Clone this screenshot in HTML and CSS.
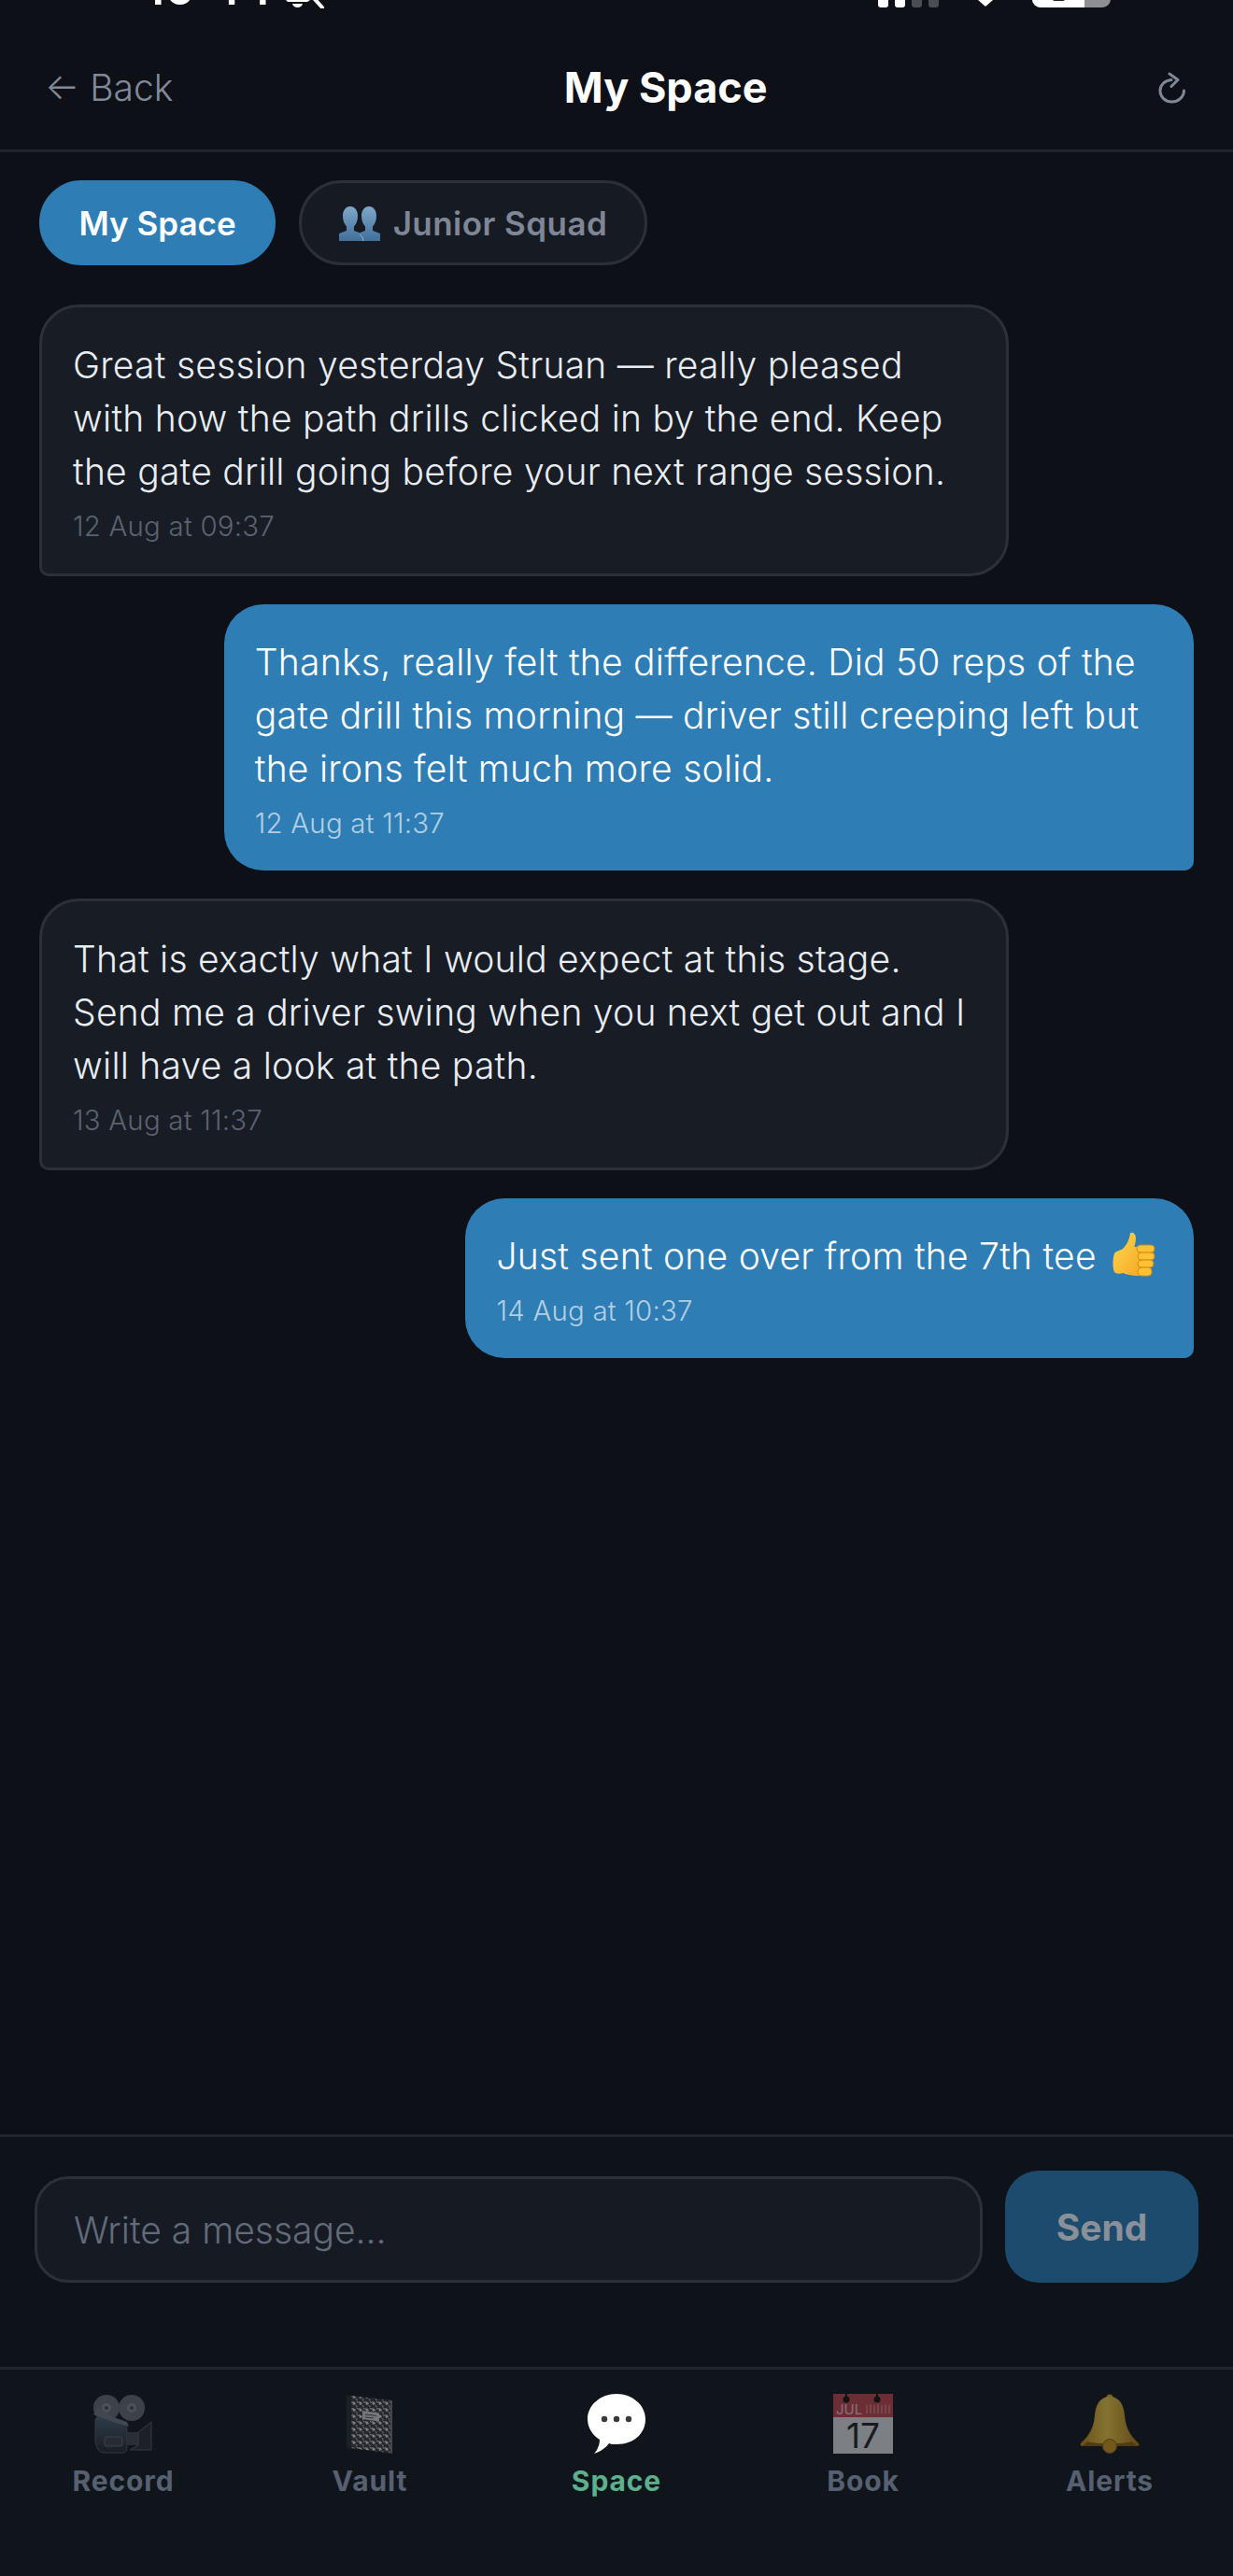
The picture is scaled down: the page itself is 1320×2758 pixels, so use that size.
FILE: index.html
```html
<!DOCTYPE html>
<html lang="en">
<head>
    <meta charset="UTF-8">
    <meta name="viewport" content="width=device-width, initial-scale=1.0">
    <title>My Space</title>
    <link rel="stylesheet" href="styles.css">
</head>
<body>
    <div class="page">
        <!-- status bar, cut off by the top of the screen -->
        <div class="status-bar">
            <div class="status-left">
                <span class="status-time">10:44</span>
                <svg class="status-bell" width="46" height="9" viewBox="0 0 46 9">
                    <path d="M2 0h26l-3 2H4z" fill="#fff"/>
                    <path d="M9 4h11c-.5 2.500-3 4-5.500 4S9.500 6.500 9 4z" fill="#fff"/>
                    <path d="M31 -3l10 11" stroke="#fff" stroke-width="4" stroke-linecap="round"/>
                </svg>
            </div>
            <div class="status-right">
                <div class="signal">
                    <span class="signal-bar"></span>
                    <span class="signal-bar"></span>
                    <span class="signal-bar off"></span>
                    <span class="signal-bar off"></span>
                </div>
                <svg class="wifi" width="16" height="7" viewBox="0 0 16 7"><path d="M0 0h16L8 7z" fill="#fff"/></svg>
                <div class="battery"><span class="battery-level"><span class="battery-num"></span></span></div>
            </div>
        </div>

        <!-- header -->
        <div class="top-bar">
            <div class="back-link">← Back</div>
            <div class="page-title">My Space</div>
            <svg class="refresh-icon" width="30" height="34" viewBox="0 0 30 34" fill="none" stroke="#7f8896" stroke-width="3" stroke-linecap="round" stroke-linejoin="round">
                <path d="M14 8.500C7.500 9 2 13.500 2 20c0 6.800 5.700 12 12.500 12S27.500 26.800 27.500 20"/>
                <path d="M12 2l9 6.500-7 7"/>
            </svg>
        </div>

        <!-- tabs -->
        <div class="tabs">
            <div class="tab active">My Space</div>
            <div class="tab">
                <svg class="people-icon" width="44" height="38" viewBox="0 0 44 38">
                    <defs>
                        <linearGradient id="peopleFill" x1="0" y1="0" x2="0" y2="1">
                            <stop offset="0" stop-color="#7fa9c9"/>
                            <stop offset="1" stop-color="#416f9b"/>
                        </linearGradient>
                    </defs>
                    <path d="M12 1c5 0 8 4.500 8 10 0 5-1.500 9-4 11.500V27l8 3v8H0v-8l8-3v-4.500C5.500 20 4 16 4 11 4 5.500 7 1 12 1z" fill="url(#peopleFill)"/>
                    <path d="M32 1c5 0 8 4.500 8 10 0 5-1.500 9-4 11.500V27l8 3v8H20v-8l8-3v-4.500C25.500 20 24 16 24 11c0-5.500 3-10 8-10z" fill="url(#peopleFill)"/>
                    <path d="M22 31l3 3 1 4" fill="none" stroke="#8fb4d2" stroke-width="1"/>
                </svg>
                Junior Squad
            </div>
        </div>

        <!-- messages -->
        <div class="messages">
            <div class="bubble them">
                <div class="bubble-text">Great session yesterday Struan — really pleased with how the path drills clicked in by the end. Keep the gate drill going before your next range session.</div>
                <div class="bubble-time">12 Aug at 09:37</div>
            </div>
            <div class="bubble me">
                <div class="bubble-text">Thanks, really felt the difference. Did 50 reps of the gate drill this morning — driver still creeping left but the irons felt much more solid.</div>
                <div class="bubble-time">12 Aug at 11:37</div>
            </div>
            <div class="bubble them">
                <div class="bubble-text">That is exactly what I would expect at this stage. Send me a driver swing when you next get out and I will have a look at the path.</div>
                <div class="bubble-time">13 Aug at 11:37</div>
            </div>
            <div class="bubble me">
                <div class="bubble-text">Just sent one over from the 7th tee
                    <svg class="thumb" width="46" height="48" viewBox="0 0 46 48">
                        <defs>
                            <linearGradient id="thumbFill" x1="0" y1="0" x2="1" y2="1">
                                <stop offset="0" stop-color="#ffd84f"/>
                                <stop offset="1" stop-color="#f5a623"/>
                            </linearGradient>
                        </defs>
                        <path d="M19 1c4-1 6 2 6 6 0 3-1 6-1.500 9H31c2 0 3 2 3 4v22c0 3-2 5-6 5-6 0-12-1-17-3-3 1-7 1-9-1-2-4-2-14 0-20 2-3 6-3 9-5 4-4 7-9 8-17z" fill="url(#thumbFill)"/>
                        <rect x="26" y="14" width="19" height="8" rx="4" fill="#fcc232" stroke="#d98a17"/>
                        <rect x="27" y="22" width="18" height="8" rx="4" fill="#fcc232" stroke="#d98a17"/>
                        <rect x="27" y="30" width="17" height="8" rx="4" fill="#fcc232" stroke="#d98a17"/>
                        <rect x="27" y="38" width="15" height="9" rx="4" fill="#fcc232" stroke="#d98a17"/>
                    </svg>
                </div>
                <div class="bubble-time">14 Aug at 10:37</div>
            </div>
        </div>

        <!-- message box -->
        <div class="composer">
            <input class="message-input" type="text" placeholder="Write a message...">
            <div class="send-btn">Send</div>
        </div>

        <!-- bottom nav -->
        <div class="bottom-nav">
            <div class="nav-item">
                <svg class="nav-icon faded" width="66" height="64" viewBox="0 0 66 64">
                    <defs>
                        <linearGradient id="camBody" x1="0" y1="0" x2="0" y2="1">
                            <stop offset="0" stop-color="#4a6478"/>
                            <stop offset="1" stop-color="#23262c"/>
                        </linearGradient>
                    </defs>
                    <circle cx="15" cy="15" r="14" fill="#6b6e76"/>
                    <circle cx="42" cy="15" r="14" fill="#6b6e76"/>
                    <circle cx="15" cy="15" r="5" fill="#8a8e96"/>
                    <circle cx="42" cy="15" r="5" fill="#8a8e96"/>
                    <circle cx="15" cy="15" r="2" fill="#44474e"/>
                    <circle cx="42" cy="15" r="2" fill="#44474e"/>
                    <path d="M3 28c0-2 2-4 5-4l20 5c5 1 9 4 9 9v20c0 3-2 5-5 5H13c-6 0-10-6-10-14z" fill="url(#camBody)" stroke="#5a5e66"/>
                    <path d="M1 22l5-7 4 3 4 1 3 4 20 7 2 5-20-6-18-7z" fill="#777a82"/>
                    <rect x="13" y="46" width="19" height="10" rx="2" fill="#3f434a" stroke="#6b6e76"/>
                    <rect x="37" y="41" width="12" height="14" fill="#44474e"/>
                    <path d="M49 41l14-11v30H40l9-5z" fill="#2b2d33" stroke="#5a5e66"/>
                </svg>
                <div class="nav-label">Record</div>
            </div>
            <div class="nav-item">
                <svg class="nav-icon faded" width="52" height="64" viewBox="0 0 52 64">
                    <defs>
                        <pattern id="speckle" width="7" height="7" patternUnits="userSpaceOnUse">
                            <rect width="7" height="7" fill="#3a3a3e"/>
                            <path d="M0 1l3 1 1 2-3 1zM4 0l3 2-1 1zM3 5l3 1-1 1z" fill="#e4e4e6"/>
                        </pattern>
                    </defs>
                    <path d="M1 1l5 1v58l-5-3z" fill="#2a2a2e"/>
                    <path d="M6 2l44 5v57L6 58z" fill="url(#speckle)"/>
                    <path d="M50 7v57l-2-1V7z" fill="#77777c"/>
                    <path d="M18 18l18 2.500v9L18 27z" fill="#d6d6d8"/>
                    <path d="M21 22l12 1.500M21 25l9 1" stroke="#555" stroke-width="1"/>
                </svg>
                <div class="nav-label">Vault</div>
            </div>
            <div class="nav-item active">
                <svg class="nav-icon" width="62" height="64" viewBox="0 0 62 64">
                    <path d="M31 0c17 0 31 12 31 27 0 16-13 27-31 27-3 0-6 0-8-1-3 4-9 9-16 11 3-3 6-9 6-15C5 44 0 36 0 27 0 12 14 0 31 0z" fill="#fff"/>
                    <circle cx="18" cy="27" r="3.200" fill="#3a3a3a"/>
                    <circle cx="31" cy="27" r="3.200" fill="#3a3a3a"/>
                    <circle cx="44" cy="27" r="3.200" fill="#3a3a3a"/>
                </svg>
                <div class="nav-label">Space</div>
            </div>
            <div class="nav-item">
                <svg class="nav-icon faded" width="64" height="64" viewBox="0 0 64 64">
                    <rect width="64" height="25" fill="#c8474c"/>
                    <rect y="25" width="64" height="39" fill="#e8e8ea"/>
                    <circle cx="14" cy="6" r="3.500" fill="#111"/>
                    <circle cx="47" cy="6" r="3.500" fill="#111"/>
                    <path d="M14 0v5M47 0v5" stroke="#111" stroke-width="2"/>
                    <text class="cal-month" x="3" y="22">JUL</text>
                    <path d="M36 21v-9M40 21v-10M44 21v-9M48 21v-10M52 21v-9M56 21v-10M60 21v-9" stroke="#e9a8aa" stroke-width="1"/>
                    <text class="cal-day" x="32" y="58">17</text>
                </svg>
                <div class="nav-label">Book</div>
            </div>
            <div class="nav-item">
                <svg class="nav-icon faded" width="64" height="64" viewBox="0 0 64 64">
                    <defs>
                        <linearGradient id="bellFill" x1="0" y1="0" x2="1" y2="0">
                            <stop offset="0" stop-color="#c68b12"/>
                            <stop offset=".45" stop-color="#f6d24a"/>
                            <stop offset="1" stop-color="#b57c0e"/>
                        </linearGradient>
                    </defs>
                    <circle cx="32" cy="4" r="3.500" fill="#e0ac24"/>
                    <path d="M32 3c10 0 15 8 16 20 1 11 4 20 15 30 1 2 0 3-2 3H3c-2 0-3-1-2-3 11-10 14-19 15-30C17 11 22 3 32 3z" fill="url(#bellFill)"/>
                    <path d="M8 51c8 3 40 3 48 0l6 5H2z" fill="#8f6409"/>
                    <circle cx="32" cy="56" r="7.500" fill="#d59a1b" stroke="#8f6409"/>
                </svg>
                <div class="nav-label">Alerts</div>
            </div>
        </div>
    </div>
</body>
</html>
```

FILE: styles.css
```css
* {
    box-sizing: border-box;
}

body {
    margin: 0;
    padding: 0;
    background-color: #0d1017;
    font-family: Inter, "Liberation Sans", sans-serif;
}

.page {
    display: flex;
    flex-direction: column;
    height: 2758px;
    overflow: hidden;
}

/* status bar */
.status-bar {
    display: flex;
    justify-content: space-between;
    align-items: flex-end;
    height: 9px;
    padding: 0 131px 0 155px;
    overflow: hidden;
    flex-shrink: 0;
}

.status-left {
    display: flex;
    align-items: flex-end;
    gap: 12px;
}

.status-time {
    color: #fff;
    font-size: 50px;
    font-weight: 600;
    line-height: 50px;
    margin-bottom: -3px;
}

.status-right {
    display: flex;
    align-items: flex-end;
    gap: 42px;
}

.signal {
    display: flex;
    gap: 7px;
}

.signal-bar {
    width: 11px;
    height: 9px;
    margin-bottom: 1px;
    background-color: #fff;
    border-radius: 0 0 3px 3px;
}

.signal-bar.off {
    background-color: #4a4d52;
}

.wifi {
    margin-bottom: 2px;
}

.battery {
    width: 84px;
    height: 9px;
    margin-bottom: 1px;
    background-color: #8e8f93;
    border-radius: 0 0 14px 14px;
    overflow: hidden;
}

.battery-level {
    display: flex;
    justify-content: center;
    width: 56px;
    height: 9px;
    background-color: #fff;
}

.battery-num {
    width: 13px;
    height: 2px;
    background-color: #222;
    border-radius: 0 0 6px 6px;
}

/* header */
.top-bar {
    display: flex;
    justify-content: space-between;
    align-items: center;
    height: 154px;
    padding: 18px 50px 0 48px;
    border-bottom: 3px solid #20242c;
    flex-shrink: 0;
}

.back-link {
    color: #828a99;
    font-size: 39px;
    font-weight: 300;
}

.page-title {
    color: #fff;
    font-size: 45px;
    font-weight: 700;
}

/* tabs */
.tabs {
    display: flex;
    gap: 25px;
    padding: 30px 42px 0;
}

.tab {
    display: flex;
    align-items: center;
    gap: 14px;
    height: 91px;
    padding: 0 39.5px;
    color: #7f8695;
    background-color: #161b23;
    border: 3px solid #2b2f38;
    border-radius: 46px;
    font-size: 35px;
    font-weight: 600;
    letter-spacing: 0.45px;
}

.tab.active {
    color: #fff;
    background-color: #2e7db5;
    border-color: #2e7db5;
    letter-spacing: 0;
}

/* messages */
.messages {
    flex: 1;
    display: flex;
    flex-direction: column;
    gap: 30px;
    padding: 42px 42px 0;
}

.bubble {
    max-width: 84%;
    padding: 33px 33px 32px;
    border-radius: 42px;
}

.bubble.them {
    align-self: flex-start;
    background-color: #181c24;
    border: 3px solid #2c3039;
    border-bottom-left-radius: 10px;
    color: #e8ecf3;
}

.bubble.me {
    align-self: flex-end;
    background-color: #2e7db5;
    border-bottom-right-radius: 10px;
    color: #fff;
}

.bubble-text {
    font-size: 39px;
    font-weight: 300;
    letter-spacing: 0.25px;
    line-height: 57px;
}

.thumb {
    vertical-align: -8px;
    margin-left: 6px;
    margin-right: 8px;
}

.bubble-time {
    margin-top: 13px;
    font-size: 29.4px;
    font-weight: 300;
    letter-spacing: 0.23px;
    line-height: 36px;
}

.them .bubble-time {
    color: #5b6370;
}

.me .bubble-time {
    color: rgba(255, 255, 255, 0.65);
}

/* message box */
.composer {
    display: flex;
    align-items: flex-end;
    gap: 24px;
    padding: 36px 37px 90px;
    background-color: #0e1219;
    border-top: 3px solid #20242c;
    flex-shrink: 0;
}

.message-input {
    flex: 1;
    height: 114px;
    padding: 0 39px;
    color: #e8ecf3;
    background-color: #161b23;
    border: 3px solid #2c3039;
    border-radius: 36px;
    outline: none;
    font-family: inherit;
    font-size: 39px;
    font-weight: 300;
}

.message-input::placeholder {
    color: #636b7a;
    opacity: 1;
}

.send-btn {
    display: flex;
    justify-content: center;
    align-items: center;
    width: 207px;
    height: 120px;
    color: #8a9099;
    background-color: #1c4b6d;
    border-radius: 36px;
    font-size: 39px;
    font-weight: 700;
}

/* bottom nav */
.bottom-nav {
    display: grid;
    grid-template-columns: repeat(5, 1fr);
    height: 224px;
    padding-top: 26px;
    background-color: #10151c;
    border-top: 3px solid #20242c;
    flex-shrink: 0;
}

.nav-item {
    display: flex;
    flex-direction: column;
    align-items: center;
    gap: 11px;
}

.nav-icon {
    display: block;
    height: 64px;
    overflow: visible;
}

.nav-icon.faded {
    opacity: 0.5;
}

.nav-label {
    color: #566070;
    font-size: 30px;
    font-weight: 700;
    letter-spacing: 0.9px;
    line-height: 36px;
}

.nav-item.active .nav-label {
    color: #5cb08d;
}

.cal-month {
    fill: #f4d4d5;
    font-size: 15px;
}

.cal-day {
    fill: #222;
    font-size: 37px;
    text-anchor: middle;
}
```
